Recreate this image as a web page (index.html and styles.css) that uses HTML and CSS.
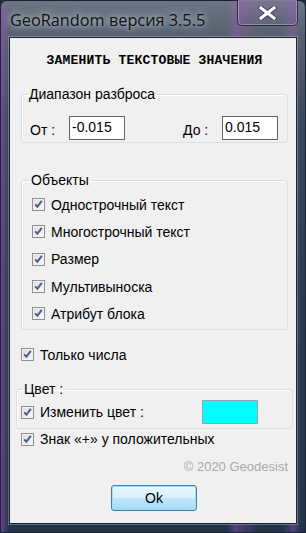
FILE: index.html
```html
<!DOCTYPE html>
<html>
<head>
    <meta charset="UTF-8">
    <title>GeoRandom</title>
    <link rel="stylesheet" href="styles.css">
</head>
<body>
    <div class="window">
        <div class="titlebar">
            <span class="title">GeoRandom версия 3.5.5</span>
            <div class="close-btn">
                <svg width="19" height="14" viewBox="0 0 19 14">
                    <path d="M3 2 L16 12 M16 2 L3 12" stroke="#3a3f48" stroke-width="5" stroke-linecap="square"/>
                    <path d="M3 2 L16 12 M16 2 L3 12" stroke="#fff" stroke-width="3.2" stroke-linecap="square"/>
                </svg>
            </div>
        </div>

        <div class="client">
            <div class="heading">ЗАМЕНИТЬ ТЕКСТОВЫЕ ЗНАЧЕНИЯ</div>

            <fieldset class="group range">
                <legend>Диапазон разброса</legend>
                <div class="range-row">
                    <label class="range-label">От :</label>
                    <div class="input">-0.015</div>
                    <label class="range-label to">До :</label>
                    <div class="input">0.015</div>
                </div>
            </fieldset>

            <fieldset class="group objects">
                <legend>Объекты</legend>
                <div class="check"><span class="box"></span>Однострочный текст</div>
                <div class="check"><span class="box"></span>Многострочный текст</div>
                <div class="check"><span class="box"></span>Размер</div>
                <div class="check"><span class="box"></span>Мультивыноска</div>
                <div class="check"><span class="box"></span>Атрибут блока</div>
            </fieldset>

            <div class="check single"><span class="box"></span>Только числа</div>

            <fieldset class="group color">
                <legend>Цвет :</legend>
                <div class="color-row">
                    <div class="check"><span class="box"></span>Изменить цвет :</div>
                    <div class="swatch"></div>
                </div>
            </fieldset>

            <div class="check sign"><span class="box"></span>Знак «+» у положительных</div>

            <div class="copyright">© 2020 Geodesist</div>

            <div class="actions">
                <button class="ok">Ok</button>
            </div>
        </div>
    </div>
</body>
</html>
```

FILE: styles.css
```css
html, body {
    margin: 0;
    padding: 0;
    background: #1e2c3c;
}
body {
    width: 306px;
    height: 533px;
    overflow: hidden;
    font-family: "Liberation Sans", Arial, sans-serif;
    font-size: 14px;
    color: #000;
}
.window {
    box-sizing: border-box;
    width: 306px;
    height: 533px;
    padding: 0 8px 8px 8px;
    display: flex;
    flex-direction: column;
    border-radius: 7px 7px 0 0;
    border: 1px solid #1a2533;
    background:
        linear-gradient(to right, rgba(160,80,190,0.55) 0, rgba(160,80,190,0) 8px),
        linear-gradient(to right, rgba(0,0,0,0) 226px, rgba(170,90,200,0.35) 234px, rgba(170,90,200,0.1) 250px, rgba(0,0,0,0) 260px, rgba(0,0,0,0) 282px, rgba(170,90,200,0.35) 292px, rgba(0,0,0,0) 300px),
        linear-gradient(to bottom, #6b7683 0, #55606e 36px, #39485a 120px, #2a3a4d 300px, #22344a 100%);
}
.titlebar {
    height: 36px;
    display: flex;
    align-items: flex-start;
}
.title {
    font-family: "Open Sans", "Noto Sans", sans-serif;
    font-size: 16.3px;
    line-height: 22px;
    padding: 8px 0 0 1px;
    color: #111;
    text-shadow: 0 0 6px rgba(220,225,235,0.9), 0 0 10px rgba(220,225,235,0.6);
}
.close-btn {
    margin-left: auto;
    margin-right: -1px;
    margin-top: -1px;
    width: 61px;
    height: 26px;
    box-sizing: border-box;
    border: 1px solid rgba(25,30,40,0.8);
    border-top: none;
    border-radius: 0 0 5px 5px;
    box-shadow: inset 0 0 0 1px rgba(200,205,215,0.45);
    background: linear-gradient(to bottom, rgba(150,110,170,0.35), rgba(110,90,140,0.3));
    display: flex;
    align-items: center;
    justify-content: center;
}
.client {
    flex: 1;
    background: #f0f0f0;
    border: 1px solid #1c2430;
    box-shadow: 0 0 0 1px rgba(200,210,225,0.35);
    padding: 0 8px 0 11px;
    display: flex;
    flex-direction: column;
}
.heading {
    font-family: "Liberation Mono", "DejaVu Sans Mono", monospace;
    font-weight: bold;
    font-size: 13px;
    letter-spacing: 0.2px;
    line-height: 20px;
    text-align: center;
    margin: 13px 0 0 0;
    height: 20px;
}
.group {
    margin: 0;
    padding: 0 8px;
    border: 1px solid #d5dfe5;
    border-radius: 3px;
    box-shadow: inset 1px 1px 0 #fff;
}
.group legend {
    padding: 0 2px 0 1px;
    margin-left: -2px;
    font-size: 14px;
    line-height: 16px;
}
.range {
    margin-top: 15px;
    padding-bottom: 2px;
}
.range-row {
    display: flex;
    align-items: center;
    margin-top: 14px;
}
.range-label {
    width: 39px;
    padding-top: 3px;
}
.range-label.to {
    width: 39px;
    margin-left: 58px;
}
.input {
    box-sizing: border-box;
    width: 56px;
    height: 24px;
    background: #fff;
    border: 1px solid #646464;
    padding: 2px 0 0 2px;
}
.objects {
    margin-top: 29px;
    padding: 3px 10px 2px 10px;
}
.objects .check {
    height: 27.3px;
}
.check {
    display: flex;
    align-items: center;
    white-space: nowrap;
}
.box {
    width: 13px;
    height: 13px;
    box-sizing: border-box;
    border: 1px solid #8f8f8f;
    margin-right: 6px;
    flex: none;
    background:
        url("data:image/svg+xml;utf8,<svg xmlns='http://www.w3.org/2000/svg' width='11' height='11' viewBox='0 0 11 11'><path d='M2.2 5.4 L4.4 7.8 L8.8 1.8' fill='none' stroke='%234a5c93' stroke-width='2'/></svg>") center / 11px 11px no-repeat,
        linear-gradient(135deg, #dcdcdc, #fafafa);
    box-shadow: inset 0 0 0 1px #f4f4f4;
}
.single {
    margin-top: 11px;
    height: 27px;
}
.color {
    margin: 13px -5px 0 -5px;
    padding: 0 10px 1px 4px;
}
.color legend {
    margin-left: 2px;
}
.color-row {
    display: flex;
    align-items: center;
    height: 30px;
}
.swatch {
    margin-left: auto;
    margin-right: 24px;
    width: 56px;
    height: 24px;
    box-sizing: border-box;
    background: #00ffff;
    border: 1px solid #a0a0a0;
}
.sign {
    margin-top: 0;
    height: 20px;
}
.copyright {
    text-align: right;
    color: #a8a8a8;
    font-size: 13px;
    line-height: 16px;
    margin-top: 10px;
    padding-right: 0;
}
.actions {
    display: flex;
    justify-content: center;
    margin-top: 10px;
}
.ok {
    width: 86px;
    height: 26px;
    margin-left: -1px;
    font-family: "Liberation Sans", Arial, sans-serif;
    font-size: 14px;
    color: #000;
    border: 1px solid #3c7fb1;
    border-radius: 3px;
    background: linear-gradient(to bottom, #eaf6fd 0, #d9f0fc 50%, #bee6fd 51%, #a7d9f5 100%);
    box-shadow: inset 0 0 0 1px #9ee1f7;
}
```
